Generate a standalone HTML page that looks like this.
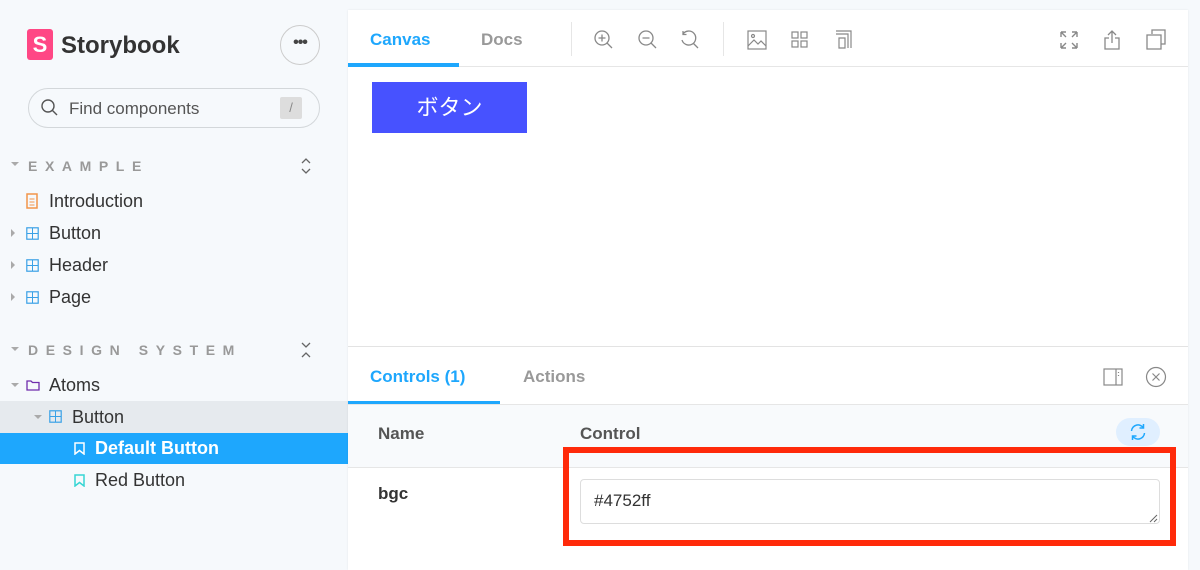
<!DOCTYPE html>
<html><head><meta charset="utf-8"><style>
*{box-sizing:border-box;margin:0;padding:0}
body{width:1200px;height:567px;overflow:hidden;background:#f6f9fc;font-family:"Liberation Sans","Noto Sans CJK JP",sans-serif;position:relative;color:#333}
.abs{position:absolute}
.side{position:absolute;left:0;top:0;width:348px;height:567px;background:#f6f9fc}
.item{position:absolute;font-size:18px;color:#333;height:32px;line-height:32px}
.hdr{position:absolute;font-size:14px;font-weight:bold;letter-spacing:7.6px;color:#999}
.panel{position:absolute;left:348px;top:10px;width:840px;height:560px;background:#fff;box-shadow:0 0 2px rgba(0,0,0,.08)}
svg{position:absolute}
</style></head><body>
<div class="side">
  <div class="abs" style="left:27px;top:29px;width:26px;height:31px;background:#ff4785;border-radius:3px;color:#fff;font-weight:bold;font-size:22px;text-align:center;line-height:31px">S</div>
  <div class="abs" style="left:61px;top:32px;font-size:24px;font-weight:bold;color:#333">Storybook</div>
  <div class="abs" style="left:280px;top:25px;width:40px;height:40px;border:1px solid #ccc;border-radius:50%;text-align:center;line-height:34px;font-size:16px;font-weight:bold;color:#444;letter-spacing:-1px">•••</div>
  <div class="abs" style="left:28px;top:88px;width:292px;height:40px;border:1px solid #d3d7da;border-radius:20px;background:#f6f9fc"></div>
  <svg style="left:40px;top:98px" width="20" height="20" viewBox="0 0 20 20"><circle cx="8" cy="8" r="6" fill="none" stroke="#555" stroke-width="1.4"/><path d="M12.5 12.5L17 17" stroke="#555" stroke-width="1.4"/></svg>
  <div class="abs" style="left:69px;top:99px;font-size:17px;color:#555">Find components</div>
  <div class="abs" style="left:280px;top:97px;width:22px;height:22px;background:#ddd;border-radius:2px;text-align:center;line-height:22px;font-size:13px;color:#888">/</div>
  <div class="abs" style="left:11px;top:162px;border:4px solid transparent;border-top:4px solid #aaa;border-bottom:0"></div>
  <div class="hdr" style="left:28px;top:158px">EXAMPLE</div>
  <svg style="left:300px;top:157px" width="12" height="18" viewBox="0 0 12 18" fill="none" stroke="#666" stroke-width="1.3"><path d="M2 6l4-4 4 4M2 12l4 4 4-4"/></svg>
  <svg style="left:26px;top:193px" width="12" height="16"><rect x="1" y="1" width="10" height="14" fill="none" stroke="#f2954a" stroke-width="1.5"/><path d="M3.5 6h5M3.5 9h5M3.5 12h5" stroke="#f2954a"/></svg>
  <div class="item" style="left:49px;top:185px">Introduction</div>
  <div class="item" style="left:49px;top:217px">Button</div>
  <div class="item" style="left:49px;top:249px">Header</div>
  <div class="item" style="left:49px;top:281px">Page</div>
  <div class="abs" style="left:11px;top:229px;border:4px solid transparent;border-left:4px solid #aaa;border-right:0"></div>
  <div class="abs" style="left:11px;top:261px;border:4px solid transparent;border-left:4px solid #aaa;border-right:0"></div>
  <div class="abs" style="left:11px;top:293px;border:4px solid transparent;border-left:4px solid #aaa;border-right:0"></div>
  <svg style="left:26px;top:227px" width="13" height="13"><rect x=".8" y=".8" width="11.4" height="11.4" fill="none" stroke="#3aa1e6" stroke-width="1.2"/><path d="M6.5 1v11M1 6.5h11" stroke="#3aa1e6" stroke-width="1"/></svg>
  <svg style="left:26px;top:259px" width="13" height="13"><rect x=".8" y=".8" width="11.4" height="11.4" fill="none" stroke="#3aa1e6" stroke-width="1.2"/><path d="M6.5 1v11M1 6.5h11" stroke="#3aa1e6" stroke-width="1"/></svg>
  <svg style="left:26px;top:291px" width="13" height="13"><rect x=".8" y=".8" width="11.4" height="11.4" fill="none" stroke="#3aa1e6" stroke-width="1.2"/><path d="M6.5 1v11M1 6.5h11" stroke="#3aa1e6" stroke-width="1"/></svg>
  <div class="abs" style="left:11px;top:347px;border:4px solid transparent;border-top:4px solid #aaa;border-bottom:0"></div>
  <div class="hdr" style="left:28px;top:342px">DESIGN SYSTEM</div>
  <svg style="left:300px;top:341px" width="12" height="18" viewBox="0 0 12 18" fill="none" stroke="#666" stroke-width="1.3"><path d="M2 2l4 4 4-4M2 16l4-4 4 4"/></svg>
  <div class="abs" style="left:11px;top:383px;border:4px solid transparent;border-top:4px solid #aaa;border-bottom:0"></div>
  <svg style="left:26px;top:379px" width="14" height="12"><path d="M1 2h4l1.5 1.5H13V11H1z" fill="none" stroke="#6f2cac" stroke-width="1.3"/></svg>
  <div class="item" style="left:49px;top:369px">Atoms</div>
  <div class="abs" style="left:0;top:401px;width:348px;height:32px;background:#e6eaee"></div>
  <div class="abs" style="left:34px;top:415px;border:4px solid transparent;border-top:4px solid #aaa;border-bottom:0"></div>
  <svg style="left:49px;top:410px" width="13" height="13"><rect x=".8" y=".8" width="11.4" height="11.4" fill="none" stroke="#3aa1e6" stroke-width="1.2"/><path d="M6.5 1v11M1 6.5h11" stroke="#3aa1e6" stroke-width="1"/></svg>
  <div class="item" style="left:72px;top:401px">Button</div>
  <div class="abs" style="left:0;top:433px;width:348px;height:31px;background:#1ea7fd"></div>
  <svg style="left:74px;top:442px" width="11" height="13"><path d="M1 1h9v11L5.5 8.5 1 12z" fill="none" stroke="#fff" stroke-width="1.5"/></svg>
  <div class="item" style="left:95px;top:432px;color:#fff;font-weight:bold">Default Button</div>
  <svg style="left:74px;top:474px" width="11" height="13"><path d="M1 1h9v11L5.5 8.5 1 12z" fill="none" stroke="#37d5d3" stroke-width="1.5"/></svg>
  <div class="item" style="left:95px;top:464px">Red Button</div>
</div>
<div class="panel">
  <div class="abs" style="left:0;top:56px;width:840px;height:1px;background:#e6e6e6"></div>
  <div class="abs" style="left:22px;top:20px;font-size:17px;font-weight:bold;color:#1ea7fd">Canvas</div>
  <div class="abs" style="left:0;top:53px;width:111px;height:4px;background:#1ea7fd"></div>
  <div class="abs" style="left:133px;top:20px;font-size:17px;font-weight:bold;color:#999">Docs</div>
  <div class="abs" style="left:223px;top:12px;width:1px;height:34px;background:#e6e6e6"></div>
  <div class="abs" style="left:375px;top:12px;width:1px;height:34px;background:#e6e6e6"></div>
  <svg style="left:245px;top:19px" width="22" height="22" viewBox="0 0 22 22" fill="none" stroke="#888" stroke-width="1.3"><circle cx="9" cy="9" r="7"/><path d="M14 14l5 5M9 5.5v7M5.5 9h7"/></svg>
  <svg style="left:289px;top:19px" width="22" height="22" viewBox="0 0 22 22" fill="none" stroke="#888" stroke-width="1.3"><circle cx="9" cy="9" r="7"/><path d="M14 14l5 5M5.5 9h7"/></svg>
  <svg style="left:331px;top:19px" width="22" height="22" viewBox="0 0 22 22" fill="none" stroke="#888" stroke-width="1.3"><path d="M4 5A7 7 0 1 1 3 11M4 2v3.5h3.5M14 14l5 5"/></svg>
  <svg style="left:399px;top:20px" width="20" height="20" viewBox="0 0 20 20" fill="none" stroke="#888" stroke-width="1.2"><rect x="1" y="1" width="18" height="18"/><path d="M1 16l6-6 4 4 3-3 5 5"/><circle cx="6" cy="6" r="1.5"/></svg>
  <svg style="left:443px;top:21px" width="17" height="17" viewBox="0 0 17 17" fill="none" stroke="#888" stroke-width="1.2"><rect x="1" y="1" width="6" height="6"/><rect x="10" y="1" width="6" height="6"/><rect x="1" y="10" width="6" height="6"/><rect x="10" y="10" width="6" height="6"/></svg>
  <svg style="left:487px;top:20px" width="17" height="19" viewBox="0 0 17 19" fill="none" stroke="#888" stroke-width="1.2"><path d="M1 1h15v17M1 4h12v14M4 8h6v10H4z"/></svg>
  <svg style="left:711px;top:20px" width="20" height="20" viewBox="0 0 20 20" fill="none" stroke="#888" stroke-width="1.4"><path d="M2 2l5 5M2 2v5M2 2h5M18 2l-5 5M18 2v5M18 2h-5M2 18l5-5M2 18v-5M2 18h5M18 18l-5-5M18 18v-5M18 18h-5"/></svg>
  <svg style="left:755px;top:19px" width="18" height="21" viewBox="0 0 18 21" fill="none" stroke="#888" stroke-width="1.3"><path d="M9 14V2M5 6l4-4 4 4M6 9H2v11h14V9h-4"/></svg>
  <svg style="left:798px;top:19px" width="20" height="21" viewBox="0 0 20 21" fill="none" stroke="#888" stroke-width="1.3"><path d="M6 5V1h13v14h-4M1 6h14v14H1z"/></svg>
  <div class="abs" style="left:24px;top:72px;width:155px;height:51px;background:#4752ff;color:#fff;font-size:22px;text-align:center;line-height:51px">ボタン</div>
  <div class="abs" style="left:0;top:336px;width:840px;height:1px;background:#e3e3e3"></div>
  <div class="abs" style="left:22px;top:357px;font-size:17px;font-weight:bold;color:#1ea7fd">Controls (1)</div>
  <div class="abs" style="left:0;top:391px;width:152px;height:4px;background:#1ea7fd"></div>
  <div class="abs" style="left:175px;top:357px;font-size:17px;font-weight:bold;color:#999">Actions</div>
  <div class="abs" style="left:0;top:394px;width:840px;height:1px;background:#e6e6e6"></div>
  <svg style="left:755px;top:358px" width="20" height="18" viewBox="0 0 20 18" fill="none" stroke="#888" stroke-width="1.2"><rect x="1" y="1" width="18" height="16"/><path d="M13 1v16M15.5 4v1M15.5 7v1"/></svg>
  <svg style="left:797px;top:356px" width="22" height="22" viewBox="0 0 22 22" fill="none" stroke="#888" stroke-width="1.2"><circle cx="11" cy="11" r="9.5"/><path d="M7.5 7.5l7 7M14.5 7.5l-7 7"/></svg>
  <div class="abs" style="left:0;top:395px;width:840px;height:62px;background:#f8fafc"></div>
  <div class="abs" style="left:30px;top:414px;font-size:17px;font-weight:bold;color:#555">Name</div>
  <div class="abs" style="left:232px;top:414px;font-size:17px;font-weight:bold;color:#555">Control</div>
  <div class="abs" style="left:768px;top:408px;width:44px;height:28px;background:#e0efff;border-radius:14px"></div>
  <svg style="left:780px;top:412px" width="20" height="20" viewBox="0 0 20 20" fill="none" stroke="#1ea7fd" stroke-width="1.5"><path d="M3.5 9a6.5 6.5 0 0 1 12-3M16.5 11a6.5 6.5 0 0 1-12 3M15.5 2v4h-4M4.5 18v-4h4"/></svg>
  <div class="abs" style="left:0;top:457px;width:840px;height:1px;background:#e6e6e6"></div>
  <div class="abs" style="left:30px;top:474px;font-size:17px;font-weight:bold;color:#333">bgc</div>
  <div class="abs" style="left:232px;top:469px;width:580px;height:45px;border:1px solid #ddd;border-radius:4px;background:#fff;font-size:17px;color:#333;padding:11px 0 0 13px">#4752ff</div>
  <svg style="left:800px;top:503px" width="10" height="10"><path d="M2 9l7-7M6 9l3-3" stroke="#666" stroke-width="1"/></svg>
  <div class="abs" style="left:215px;top:437px;width:613px;height:99px;border:6px solid #ff2a0a"></div>
</div>
</body></html>
